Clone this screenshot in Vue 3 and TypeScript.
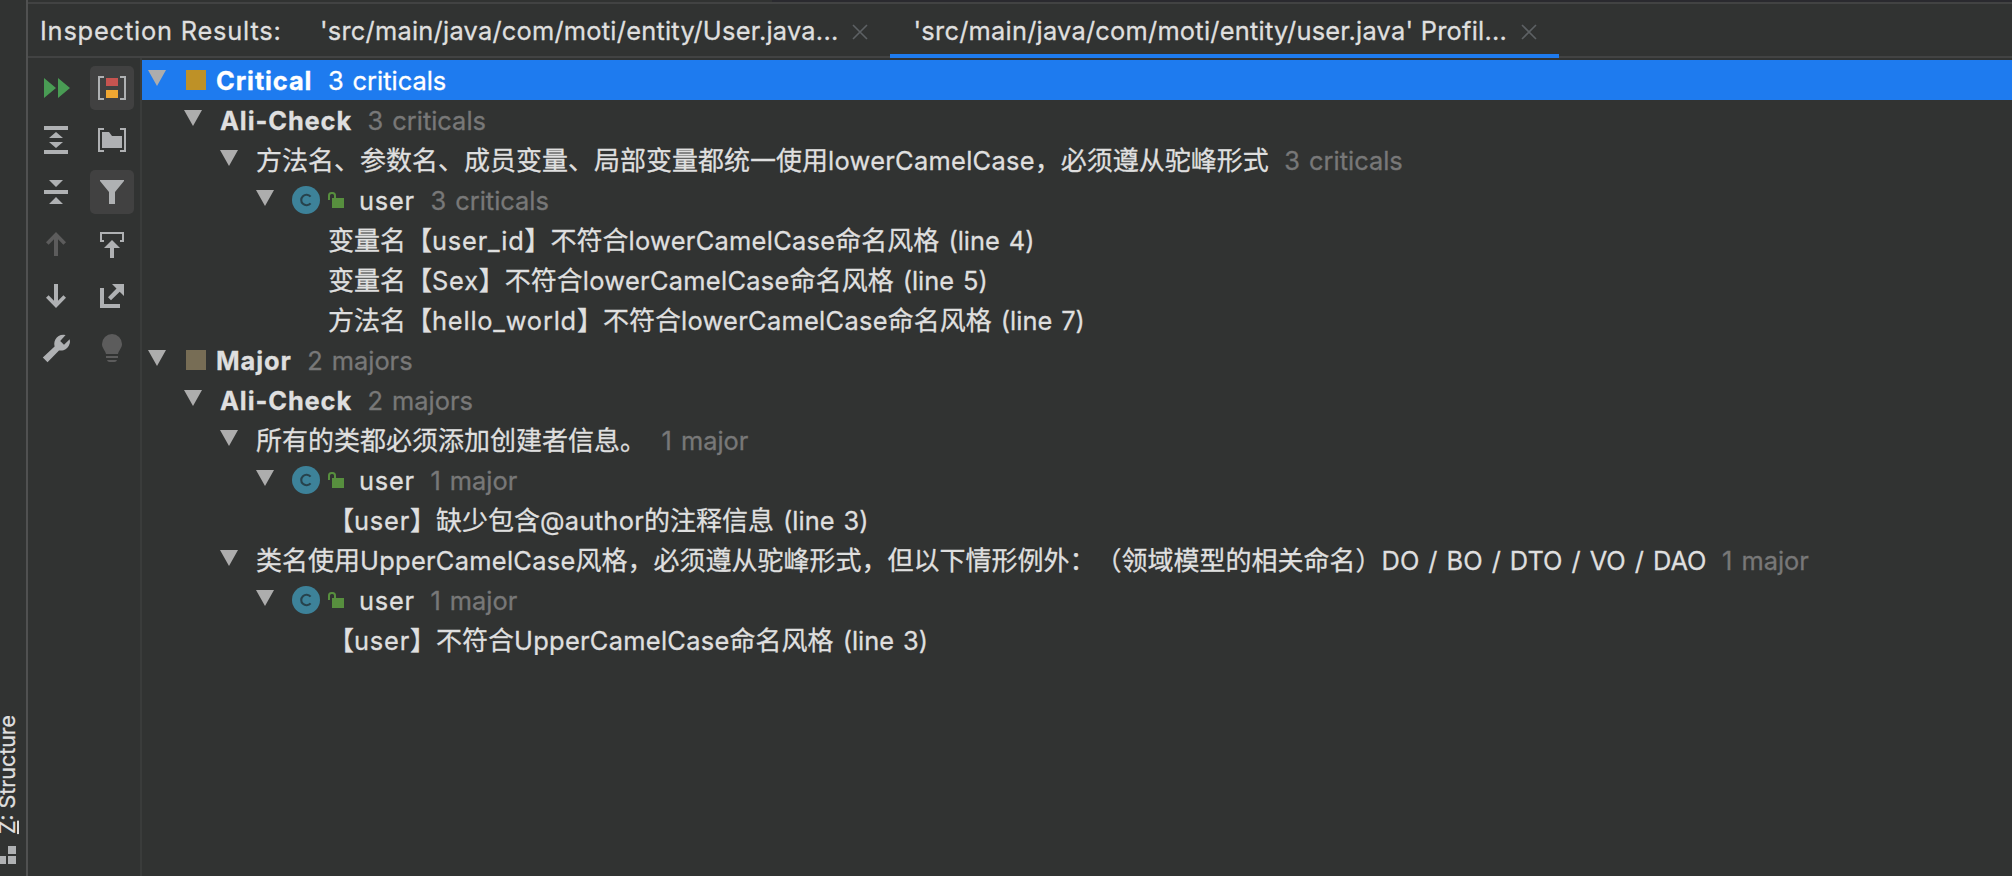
<script setup lang="ts">
interface Run { text: string; cls: string }
interface Node {
  level: number
  kind: 'severity' | 'group' | 'rule' | 'class' | 'leaf'
  text: string
  count?: string
  tone?: 'critical' | 'major'
  selected?: boolean
}

const nodes: Node[] = [
  { level: 0, kind: 'severity', text: 'Critical', count: '3 criticals', tone: 'critical', selected: true },
  { level: 1, kind: 'group', text: 'Ali-Check', count: '3 criticals' },
  { level: 2, kind: 'rule', text: '方法名、参数名、成员变量、局部变量都统一使用lowerCamelCase，必须遵从驼峰形式', count: '3 criticals' },
  { level: 3, kind: 'class', text: 'user', count: '3 criticals' },
  { level: 4, kind: 'leaf', text: '变量名【user_id】不符合lowerCamelCase命名风格 (line 4)' },
  { level: 4, kind: 'leaf', text: '变量名【Sex】不符合lowerCamelCase命名风格 (line 5)' },
  { level: 4, kind: 'leaf', text: '方法名【hello_world】不符合lowerCamelCase命名风格 (line 7)' },
  { level: 0, kind: 'severity', text: 'Major', count: '2 majors', tone: 'major' },
  { level: 1, kind: 'group', text: 'Ali-Check', count: '2 majors' },
  { level: 2, kind: 'rule', text: '所有的类都必须添加创建者信息。', count: '1 major' },
  { level: 3, kind: 'class', text: 'user', count: '1 major' },
  { level: 4, kind: 'leaf', text: '【user】缺少包含@author的注释信息 (line 3)' },
  { level: 2, kind: 'rule', text: '类名使用UpperCamelCase风格，必须遵从驼峰形式，但以下情形例外：（领域模型的相关命名）DO / BO / DTO / VO / DAO', count: '1 major' },
  { level: 3, kind: 'class', text: 'user', count: '1 major' },
  { level: 4, kind: 'leaf', text: '【user】不符合UpperCamelCase命名风格 (line 3)' },
]

const tabs = [
  { title: "'src/main/java/com/moti/entity/User.java...", active: false },
  { title: "'src/main/java/com/moti/entity/user.java' Profil...", active: true },
]

// Latin and CJK runs use slightly different sizes so that their heights agree;
// identifiers and camel-case words are tracked a little wider.
function runClass(t: string): string {
  if (!/^[\x20-\x7e]/.test(t)) return 'cjk'
  if (/CamelCase|@/.test(t)) return 'latin camel'
  if (/^\w+$/.test(t)) return 'latin ident'
  return 'latin'
}
function runs(text: string): Run[] {
  return (text.match(/[\x20-\x7e]+|[^\x20-\x7e]+/g) ?? []).map((t) => ({ text: t, cls: runClass(t) }))
}
</script>

<template>
  <div class="window" lang="zh-CN">
    <aside class="stripe">
      <div class="stripe-label"><u>Z</u>: Structure</div>
      <svg class="stripe-icon" width="16" height="18" viewBox="0 0 16 18"><path d="M8 0h8v8H8zM-2 10h8v8h-8zM8 10h8v8H8z" fill="#afb1b3" /></svg>
    </aside>

    <div class="main">
      <div class="editor-edge"></div>
      <header class="tabs">
        <span class="title">Inspection Results:</span>
        <div v-for="tab in tabs" :key="tab.title" class="tab" :class="{ active: tab.active }">
          <span class="tab-title">{{ tab.title }}</span>
          <svg class="close" width="16" height="16" viewBox="0 0 16 16"><path d="M1 1l14 14M15 1L1 15" stroke="#5d6164" stroke-width="1.6" /></svg>
        </div>
      </header>

      <div class="content">
        <nav class="toolbar">
          <button><svg viewBox="0 0 44 44"><path d="M10 12l12 10-12 10zM24 12l12 10-12 10z" fill="#499c54" /></svg></button>
          <button class="on"><svg viewBox="0 0 44 44"><path d="M14 11H9v22h5M30 11h5v22h-5" class="line" /><path d="M16 12h12v8H16z" fill="#c75450" /><path d="M16 24h12v8H16z" fill="#f0a732" /></svg></button>
          <button><svg viewBox="0 0 44 44"><path d="M10 8h24v4H10zM10 32h24v4H10zM22 14l7 6H15zM22 30l7-6H15z" /></svg></button>
          <button><svg viewBox="0 0 44 44"><path d="M14 11H9v22h5M30 11h5v22h-5" class="line" /><path d="M12 14h7l3 4h10v12H12z" /></svg></button>
          <button><svg viewBox="0 0 44 44"><path d="M15 10h14l-7 7zM10 20h24v4H10zM22 27l7 7H15z" /></svg></button>
          <button class="on"><svg viewBox="0 0 44 44"><path d="M10 10h24v1l-9 11v12h-6V22l-9-11z" /></svg></button>
          <button><svg viewBox="0 0 44 44" class="dim"><path d="M22 10l10 10.2-2.6 2.6L24 17.300V34h-4V17.300l-5.400 5.500L12 20.200z" /></svg></button>
          <button><svg viewBox="0 0 44 44"><path d="M14 19h-3v-8h22v8h-3" class="line" /><path d="M22 18l8 8h-6v10h-4V26h-6z" /></svg></button>
          <button><svg viewBox="0 0 44 44"><path d="M22 34l10-10.200-2.600-2.600L24 26.700V10h-4v16.700l-5.400-5.500L12 23.800z" /></svg></button>
          <button><svg viewBox="0 0 44 44"><path d="M10 14h4v16h16v4H10zM22 10h12v12l-4.300-4.300-8.700 8.600-3-3 8.500-8.800z" /></svg></button>
          <button><svg viewBox="0 0 44 44"><path d="M31.600 9A9.200 9.200 0 0 0 20.600 20.500L8.800 31.400l4.700 4.800L25 24.400A9.200 9.200 0 0 0 35.700 13.300L30 18.700l-3.800-3.800z" /></svg></button>
          <button><svg viewBox="0 0 44 44" class="dim"><path d="M22 8a10 10 0 0 1 10 10c0 4-3 6-4 10H16c-1-4-4-6-4-10A10 10 0 0 1 22 8zM16 30h12v2H16zM17 34h10q-.5 2-2.500 2h-5q-2 0-2.500-2z" /></svg></button>
        </nav>

        <div class="tree">
          <div v-for="(n, i) in nodes" :key="i" class="row" :class="['level-' + n.level, n.kind, { selected: n.selected }]">
            <svg v-if="n.kind !== 'leaf'" class="arrow" width="18" height="16" viewBox="0 0 18 16"><path d="M0 0h18L9 16z" fill="#adadad" /></svg>
            <span v-if="n.tone" class="swatch" :class="n.tone"></span>
            <svg v-if="n.kind === 'class'" class="class-icon" width="52" height="28" viewBox="0 0 52 28">
              <circle cx="14" cy="14" r="14" fill="#3d8299" />
              <path d="M18.600 10.600A5.300 5.300 0 1 0 18.600 17.400" fill="none" stroke="#27424c" stroke-width="2.100" />
              <path d="M40 12h12v10H40z" fill="#578f3e" />
              <path d="M37 14V9.500Q37 7 39.500 7H40.500Q43 7 43 9.500V12" fill="none" stroke="#578f3e" stroke-width="2" />
            </svg>
            <span class="text"><span v-for="(r, j) in runs(n.text)" :key="j" :class="r.cls">{{ r.text }}</span></span>
            <span v-if="n.count" class="count">{{ n.count }}</span>
          </div>
        </div>
      </div>
    </div>
  </div>
</template>

<style>
body { margin: 0; background: #313332; overflow: hidden; }
</style>

<style scoped>
.window {
  display: flex;
  width: 2012px;
  height: 876px;
  overflow: hidden;
  background: #313332;
  color: #dfdfdf;
  font-family: Inter, "Noto Sans CJK SC", sans-serif;
  font-size: 25.4px;
  white-space: pre;
  text-spacing-trim: space-all;
  -webkit-text-stroke-width: 0.3px;
}
.stripe {
  box-sizing: border-box;
  width: 28px;
  flex: none;
  border-right: 2px solid #505151;
  display: flex;
  flex-direction: column;
  justify-content: flex-end;
  padding-bottom: 12px;
}
.stripe-label {
  writing-mode: vertical-rl;
  transform: rotate(180deg);
  width: 24px;
  line-height: 24px;
  font-size: 21.4px;
  margin: 0 0 12px -5.5px;
}
.stripe-label u { text-decoration-thickness: 2px; text-underline-offset: -1px; }
.stripe-icon { display: block; }
.main { flex: 1; min-width: 0; display: flex; flex-direction: column; }
.editor-edge { height: 2px; flex: none; margin-left: 744px; background: #2a2a2f; }
.tabs {
  box-sizing: border-box;
  height: 56px;
  flex: none;
  display: flex;
  border-top: 2px solid #424343;
  border-bottom: 2px solid #424343;
  line-height: 54px;
}
.title { width: 267px; padding-left: 12px; letter-spacing: 0.8px; }
.tab { display: flex; height: 54px; box-sizing: border-box; padding: 0 22px 0 23.5px; letter-spacing: 0.24px; }
.tab:first-of-type { padding-left: 13px; }
.tab.active { border-bottom: 4px solid #1e7bef; }
.close { margin: 20px 0 0 13.5px; }
.content { flex: 1; display: flex; min-height: 0; }
.toolbar {
  box-sizing: border-box;
  width: 114px;
  flex: none;
  border-right: 2px solid #3a3c3b;
  padding: 8px 6px;
  display: grid;
  grid-template-columns: 44px 44px;
  grid-auto-rows: 44px;
  gap: 8px 12px;
}
.toolbar button { border: 0; padding: 0; background: none; border-radius: 5px; }
.toolbar button.on { background: #414141; }
.toolbar svg { display: block; width: 44px; height: 44px; fill: #afb1b3; }
.toolbar svg.dim { fill: #5c5c5c; }
.toolbar .line { fill: none; stroke: #afb1b3; stroke-width: 2; }
.tree { flex: 1; padding-top: 2px; }
.row { height: 40px; display: flex; line-height: 41px; word-spacing: 1.9px; }
.row.selected { background: #1e7bef; color: #fff; }
.level-0 { padding-left: 6px; }
.level-1 { padding-left: 42px; }
.level-2 { padding-left: 78px; }
.level-3 { padding-left: 114px; }
.level-4 { padding-left: 186px; }
.arrow { margin: 10px 18px 0 0; flex: none; }
.swatch { width: 20px; height: 20px; margin: 10px 10px 0 2px; }
.critical { background: #be9127; }
.major { background: #776d55; }
.class-icon { margin: 6px 15px 0 0; flex: none; }
.text { font-size: 26px; }
.latin { font-size: 25.4px; }
.camel { letter-spacing: 0.3px; }
.ident { letter-spacing: 0.8px; }
.severity .text, .group .text { font-weight: 700; }
.severity .latin, .group .latin { letter-spacing: 0.9px; }
.count { color: #787878; margin-left: 15.5px; }
.selected .count { color: #fff; }
</style>
